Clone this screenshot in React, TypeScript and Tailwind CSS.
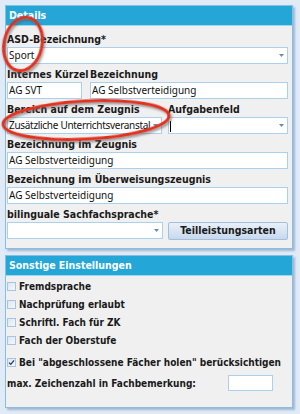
import React from 'react';

const labelFont = { fontFamily: '"DejaVu Sans Condensed", "DejaVu Sans", Tahoma, sans-serif' };
const inputFont = { fontFamily: '"Noto Sans", "Open Sans", sans-serif' };

function Arrow() {
  return (
    <svg width="5" height="3" viewBox="0 0 5 3" className="shrink-0">
      <path d="M0 0 L5 0 L2.5 3 Z" fill="#6a8cb0" />
    </svg>
  );
}

function Field({ label, children }: { label: string; children: React.ReactNode }) {
  return (
    <div className="flex min-w-0 flex-col">
      <div className="h-[16px] text-[10.5px] font-bold leading-[16px] text-[#1a1a1a] whitespace-nowrap" style={labelFont}>
        {label}
      </div>
      {children}
    </div>
  );
}

function TextInput({ value = '' }: { value?: string }) {
  return (
    <div
      className="flex h-[17px] items-center border border-[#a9d0ec] bg-white pl-[1px] text-[10px] text-[#111] whitespace-nowrap overflow-hidden"
      style={inputFont}
    >
      {value}
    </div>
  );
}

function SelectInput({ value = '', caret = false, tight = false }: { value?: string; caret?: boolean; tight?: boolean }) {
  return (
    <div
      className="flex h-[17px] items-center border border-[#a9d0ec] bg-white pl-[1px] pr-[3px] text-[10px] text-[#111] whitespace-nowrap"
      style={inputFont}
    >
      <span className={`flex-1 overflow-hidden ${tight ? 'tracking-[-0.3px]' : ''}`}>
        {caret ? <span className="inline-block h-[11px] w-px bg-black align-middle" /> : value}
      </span>
      <Arrow />
    </div>
  );
}

function Check({ checked = false, label }: { checked?: boolean; label: string }) {
  return (
    <div className="flex h-[18px] items-center gap-[3px]">
      <div className="flex h-[9px] w-[9px] shrink-0 items-center justify-center border border-[#a9c4de] bg-gradient-to-br from-[#dbe6f2] to-[#f4f8fc]">
        {checked && (
          <svg width="7" height="7" viewBox="0 0 7 7">
            <path d="M1 3.6 L2.8 5.4 L6 1.4" stroke="#2a3a55" strokeWidth="1.3" fill="none" />
          </svg>
        )}
      </div>
      <span className="text-[10px] font-bold text-[#1a1a1a] whitespace-nowrap" style={labelFont}>
        {label}
      </span>
    </div>
  );
}

function Panel({ title, children, className }: { title: string; children: React.ReactNode; className?: string }) {
  return (
    <div className={`border border-[#86bfe2] bg-[#f0f0f0] shadow-[2px_2px_2px_rgba(110,140,180,0.55)] ${className ?? ''}`}>
      <div
        className="flex h-[20px] items-center border-b border-[#9ed6ef] bg-[#24a6d6] pl-[3px] text-[10.5px] font-bold text-white"
        style={labelFont}
      >
        {title}
      </div>
      {children}
    </div>
  );
}

export default function App() {
  return (
    <div className="relative h-[414px] w-[300px] overflow-hidden bg-[#e1ebf8] pl-[5px] pt-[5px]">
      <div className="w-[288px]">
        <Panel title="Details">
          <div className="flex flex-col gap-[2px] pb-[8px] pl-[1px] pr-[4px] pt-[5px]">
            <Field label="ASD-Bezeichnung*">
              <SelectInput value="Sport" />
            </Field>
            <div className="flex gap-[8px]">
              <div className="w-[75px] shrink-0">
                <Field label="Internes Kürzel">
                  <TextInput value="AG SVT" />
                </Field>
              </div>
              <div className="flex-1">
                <Field label="Bezeichnung">
                  <TextInput value="AG Selbstverteidigung" />
                </Field>
              </div>
            </div>
            <div className="flex gap-[6px]">
              <div className="w-[155px] shrink-0">
                <Field label="Bereich auf dem Zeugnis">
                  <SelectInput tight value="Zusätzliche Unterrichtsveranstal" />
                </Field>
              </div>
              <div className="flex-1">
                <Field label="Aufgabenfeld">
                  <SelectInput caret />
                </Field>
              </div>
            </div>
            <Field label="Bezeichnung im Zeugnis">
              <TextInput value="AG Selbstverteidigung" />
            </Field>
            <Field label="Bezeichnung im Überweisungszeugnis">
              <TextInput value="AG Selbstverteidigung" />
            </Field>
            <div className="flex items-start gap-[5px]">
              <div className="w-[156px] shrink-0">
                <Field label="bilinguale Sachfachsprache*">
                  <SelectInput />
                </Field>
              </div>
              <div className="flex flex-1 flex-col">
                <div className="h-[16px]" />
                <button
                  type="button"
                  className="h-[18px] rounded-[2px] border border-[#a3bfdc] bg-gradient-to-b from-[#e9f0f9] to-[#c8d9ed] text-[10.5px] font-bold text-[#1a1a1a]"
                  style={labelFont}
                >
                  Teilleistungsarten
                </button>
              </div>
            </div>
          </div>
        </Panel>

        <Panel title="Sonstige Einstellungen" className="mt-[6px]">
          <div className="flex flex-col pb-[15px] pl-[1px] pr-[4px] pt-[1px]">
            <Check label="Fremdsprache" />
            <Check label="Nachprüfung erlaubt" />
            <Check label="Schriftl. Fach für ZK" />
            <Check label="Fach der Oberstufe" />
            <div className="mt-[4px]">
              <Check checked label={'Bei "abgeschlossene Fächer holen" berücksichtigen'} />
            </div>
            <div className="mt-[3px] flex h-[18px] items-center">
              <span className="w-[221px] text-[10px] font-bold text-[#1a1a1a] whitespace-nowrap" style={labelFont}>
                max. Zeichenzahl in Fachbemerkung:
              </span>
              <div className="h-[16px] w-[45px] border border-[#a9d0ec] bg-white" />
            </div>
          </div>
        </Panel>
      </div>

      <svg className="pointer-events-none absolute left-0 top-0" width="300" height="414">
        <defs>
          <filter id="sh" x="-20%" y="-20%" width="140%" height="140%">
            <feDropShadow dx="1.5" dy="2" stdDeviation="1.2" floodColor="#555" floodOpacity="0.6" />
          </filter>
        </defs>
        <ellipse cx="23" cy="44" rx="19" ry="27" transform="rotate(12 23 44)" fill="none" stroke="#e0301e" strokeWidth="3" filter="url(#sh)" />
        <ellipse cx="86" cy="120" rx="83" ry="19" transform="rotate(-3 86 120)" fill="none" stroke="#e0301e" strokeWidth="3" filter="url(#sh)" />
      </svg>
    </div>
  );
}
